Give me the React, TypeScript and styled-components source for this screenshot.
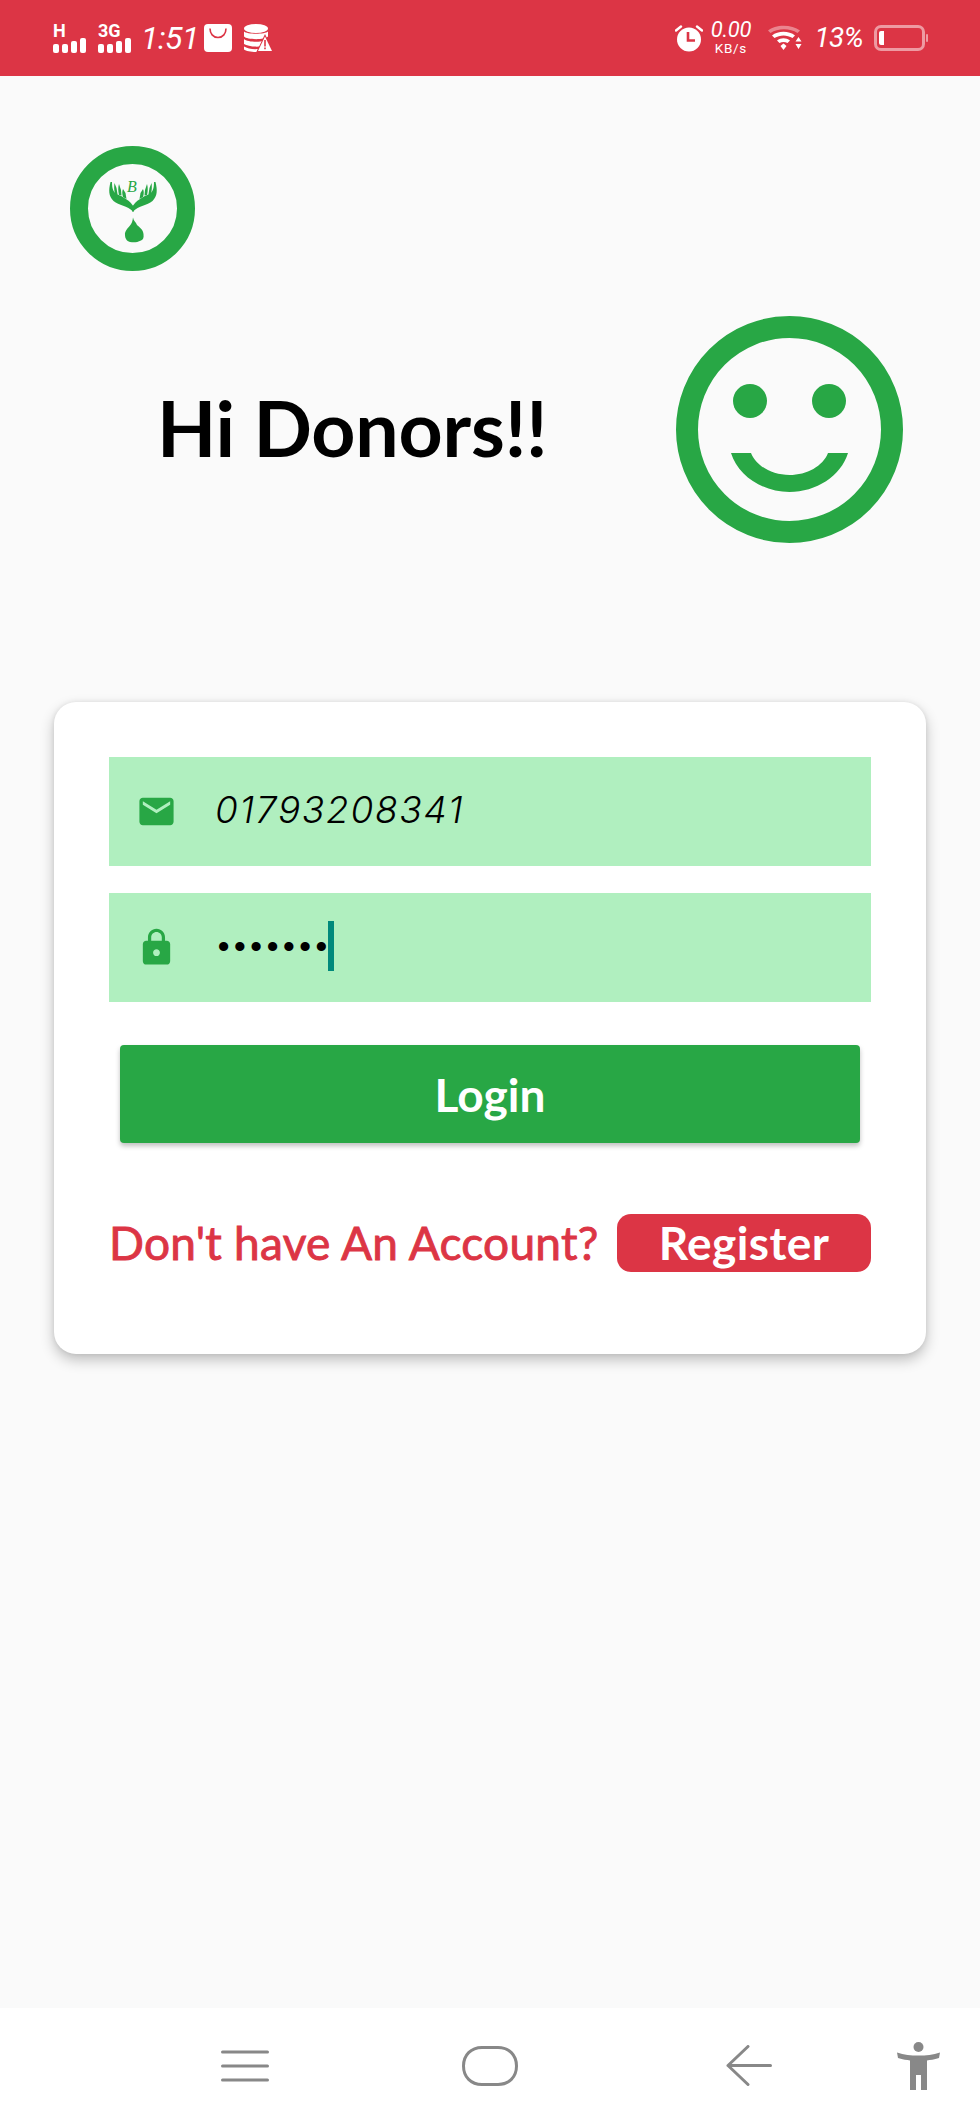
import React from "react";
import styled, { createGlobalStyle } from "styled-components";

const Global = createGlobalStyle`
  html, body { margin: 0; padding: 0; background: #fafafa; }
  * { box-sizing: border-box; }
`;

const Page = styled.div`
  width: 980px; height: 2123px; display: flex; flex-direction: column;
  background: #fafafa; overflow: hidden; font-family: Lato, "Open Sans", sans-serif;
`;

const StatusBar = styled.header`
  height: 76px; flex: none; background: #dc3545; color: #fff;
  display: flex; justify-content: space-between; align-items: center;
  padding: 0 55px 0 53px; font-family: Roboto, sans-serif;
`;
const StatusGroup = styled.div`
  display: flex; align-items: center;
`;
const Network = styled.div`
  display: flex; flex-direction: column; width: 33px; margin-right: 12px; margin-top: -1px;
`;
const NetworkLabel = styled.span`
  font-size: 18px; font-weight: 700; line-height: 15px; height: 15px;
`;
const SignalBars = styled.svg`
  display: block; width: 33px; height: 15px;
`;
const Time = styled.span`
  font-size: 32px; font-style: italic; line-height: 32px; letter-spacing: -0.5px;
  width: 61px; margin-left: -2px;
`;
const StatusIcon = styled.svg<{ $gap?: number }>`
  display: block; flex: none; margin-left: ${p => p.$gap ?? 0}px;
`;
const Speed = styled.div`
  display: flex; flex-direction: column; align-items: center; margin: -2px 16px 0 6px; width: 43px;
`;
const SpeedValue = styled.span`
  font-size: 22px; font-style: italic; line-height: 21px; letter-spacing: -0.3px;
`;
const SpeedUnit = styled.span`
  font-size: 13.5px; line-height: 13px; letter-spacing: 0.7px; margin-top: 2px;
`;
const Percent = styled.span`
  font-size: 28px; font-style: italic; line-height: 30px; margin: 0 11px 0 12px; letter-spacing: -0.6px;
`;
const Battery = styled.div`
  width: 51px; height: 26px; border: 3px solid rgba(255,255,255,.5); border-radius: 7px;
  padding: 3px 2px; position: relative;
  &::after {
    content: ""; position: absolute; right: -6px; top: 6px; width: 2px; height: 8px;
    background: rgba(255,255,255,.5); border-radius: 1px;
  }
`;
const BatteryLevel = styled.div`
  width: 5px; height: 100%; background: #fff; border-radius: 2px 0 0 2px;
`;

const Main = styled.main`
  flex: 1; display: flex; flex-direction: column; padding: 70px 54px 0;
`;
const Logo = styled.svg`
  display: block; width: 125px; height: 125px; margin-left: 16px;
`;
const Hero = styled.section`
  display: flex; justify-content: space-between; align-items: center;
  margin-top: 45px; padding: 0 23px 0 103px;
`;
const Title = styled.h1`
  margin: 0 0 6px; font-size: 77px; line-height: 92px; font-weight: 700; color: #000;
  font-family: Lato, sans-serif; letter-spacing: -0.2px;
`;
const Smiley = styled.svg`
  display: block; width: 227px; height: 227px;
`;

const Card = styled.section`
  margin-top: 159px; height: 652px; background: #fff; border-radius: 22px;
  box-shadow: 0 6px 14px rgba(0,0,0,.24), 0 0 5px rgba(0,0,0,.08);
  padding: 55px 55px 0 55px;
`;
const Field = styled.div`
  height: 109px; background: #b0efbf; display: flex; align-items: center;
  padding-left: 27px; & + & { margin-top: 27px; }
`;
const FieldIcon = styled.svg`
  display: block; width: 41px; height: 41px; fill: #28a745; flex: none;
`;
const FieldText = styled.span`
  margin: 0 0 4px 38px; font-family: Inter, sans-serif; font-size: 37px; font-style: italic;
  font-weight: 300; letter-spacing: 1.7px; color: #000; line-height: 50px;
`;
const Dots = styled.span`
  margin: 0 0 4px 41px; font-family: "Liberation Sans", sans-serif; font-size: 32px; font-weight: 700;
  letter-spacing: 5.1px; color: #000; line-height: 50px;
`;
const Caret = styled.span`
  width: 6px; height: 50px; background: #00897b; margin: 0 0 4px -4px; flex: none;
`;
const LoginButton = styled.button`
  display: block; width: 740px; height: 98px; margin: 43px 0 0 11px; border: 0; border-radius: 4px;
  background: #28a745; color: #fff; font-family: Lato, sans-serif; font-size: 46px; font-weight: 700;
  box-shadow: 0 3px 5px rgba(0,0,0,.25); padding: 0;
`;
const RegisterRow = styled.div`
  display: flex; align-items: center; justify-content: space-between; margin-top: 71px;
`;
const Prompt = styled.span`
  font-family: Lato, sans-serif; font-size: 46px; font-weight: 400; color: #dc3545; line-height: 58px;
  letter-spacing: 0.25px; -webkit-text-stroke: 0.9px #dc3545;
`;
const RegisterButton = styled.button`
  width: 254px; height: 58px; border: 0; border-radius: 14px; background: #dc3545; color: #fff;
  font-family: Lato, sans-serif; font-size: 46px; font-weight: 700; line-height: 58px; padding: 0;
  letter-spacing: 0.4px;
`;

const NavBar = styled.nav`
  height: 115px; flex: none; background: #fff; display: flex; align-items: center; position: relative;
`;
const NavIcon = styled.svg<{ $left: number; $w: number; $h: number }>`
  display: block; flex: none; width: ${p => p.$w}px; height: ${p => p.$h}px; margin-left: ${p => p.$left}px;
  fill: none; stroke: #888;
`;
const AccessIcon = styled(NavIcon)`
  stroke: none; fill: #888;
`;

const Bars = () => (
  <SignalBars viewBox="0 0 33 15" fill="#fff">
    <rect x="0" y="6" width="6" height="9" rx="2" /><rect x="9" y="6" width="6" height="9" rx="2" />
    <rect x="18" y="3" width="6" height="12" rx="2" /><rect x="27" y="0" width="6" height="15" rx="2" />
  </SignalBars>
);

export default function App() {
  return (
    <Page>
      <Global />
      <StatusBar>
        <StatusGroup>
          <Network>
            <NetworkLabel>H</NetworkLabel>
            <Bars />
          </Network>
          <Network>
            <NetworkLabel>3G</NetworkLabel>
            <Bars />
          </Network>
          <Time>1:51</Time>
          <StatusIcon $gap={2} width="28" height="28" viewBox="0 0 28 28">
            <rect width="28" height="28" rx="4" fill="#fff" />
            <path d="M6 4.500c0 5 3 9 8 9s8-4 8-9" fill="none" stroke="#dc3545" strokeWidth="1.600" />
          </StatusIcon>
          <StatusIcon $gap={12} width="29" height="28" viewBox="0 0 29 28">
            <ellipse cx="12" cy="4.500" rx="12" ry="4.500" fill="#fff" />
            <path d="M0 7.500c3 3 21 3 24 0v5c-3 3.500-21 3.500-24 0zM0 15c3 3 15 3.500 19 2l-3 5.500c-6 .5-13-.5-16-2.500zM0 22.500c3 2 9 3 14 2.500l-1.500 3C7 28 2 27 0 25.500z" fill="#fff" />
            <path d="M21 10L29.500 28H12.500z" fill="#dc3545" />
            <path d="M21 12.500L28 27H14z" fill="#fff" />
            <path d="M20.200 16h1.600v6.500h-1.600zM20.200 23.500h1.600v1.800h-1.600z" fill="#dc3545" />
          </StatusIcon>
        </StatusGroup>
        <StatusGroup>
          <StatusIcon width="28" height="28" viewBox="0 0 28 28">
            <circle cx="14" cy="15.500" r="12" fill="#fff" />
            <path d="M13 8v8.500h7" fill="none" stroke="#dc3545" strokeWidth="2.600" />
            <path d="M1 6.500L6 2.500M27 6.500L22 2.500" stroke="#fff" strokeWidth="2.400" strokeLinecap="round" />
          </StatusIcon>
          <Speed>
            <SpeedValue>0.00</SpeedValue>
            <SpeedUnit>KB/s</SpeedUnit>
          </Speed>
          <StatusIcon width="34" height="26" viewBox="0 0 34 26">
            <path d="M0 5.500C7-1 24-1 32 5.500L29.500 8C22 3 10 3 2.500 8z" fill="#fff" opacity=".4" />
            <path d="M4 10.500C10 5.500 21 5.500 27 10.500L24.500 13C19 9.500 12 9.500 6.500 13z" fill="#fff" />
            <path d="M9 15.500C13 12.500 18 12.500 22 15.500L19.500 18C17 16.500 14 16.500 11.500 18z" fill="#fff" />
            <path d="M12.500 21L15.500 18.500L18.500 21L15.500 25z" fill="#fff" />
            <path d="M30.500 12l3 4.500h-6zM30.500 24l3-5h-6z" fill="#fff" />
          </StatusIcon>
          <Percent>13%</Percent>
          <Battery><BatteryLevel /></Battery>
        </StatusGroup>
      </StatusBar>

      <Main>
        <Logo viewBox="0 0 125 125">
          <circle cx="62.500" cy="62.500" r="53.500" fill="none" stroke="#28a745" strokeWidth="18" />
          <text x="62" y="46" textAnchor="middle" fontFamily="'Liberation Serif', serif" fontStyle="italic" fontSize="16" fill="#28a745">B</text>
          <g fill="#28a745">
            <path d="M63.500 66C57 59 49 60 43.500 55C38.500 50 38.500 44 40.500 36L42 36C42 42 43 46 47 48C53 51 60 54 64.500 62z" />
            <path d="M45 48C44 44 44 40 44.500 37L46.500 42L47.500 48zM49 49C48 45 48 41 49 38L51 44L51.500 49.500zM53 51C52 48 52 45 53 43L55.500 47L56.500 53z" />
            <path d="M62.500 66C69 59 77 60 82.500 55C87.500 50 87.500 44 85.500 36L84 36C84 42 83 46 79 48C73 51 66 54 61.500 62z" />
            <path d="M81 48C82 44 82 40 81.500 37L79.500 42L78.500 48zM77 49C78 45 78 41 77 38L75 44L74.500 49.500zM73 51C74 48 74 45 73 43L70.500 47L69.500 53z" />
            <path d="M63 71.500C63.500 75 66 76 67 79C69 81 73 83 73.500 88C74 92 73 94 71 94.500C67 96.500 64 96.500 60 96C56.500 95 55 92 55 89C54.500 85 58 82 60 79.500C62 77 62.500 75 63 71.500z" />
          </g>
        </Logo>
        <Hero>
          <Title>Hi Donors!!</Title>
          <Smiley viewBox="0 0 227 227">
            <circle cx="113.500" cy="113.500" r="102.500" fill="none" stroke="#28a745" strokeWidth="22" />
            <circle cx="74" cy="85" r="17" fill="#28a745" />
            <circle cx="153" cy="85" r="17" fill="#28a745" />
            <path d="M55 137H75C80 150 96 159 113.500 159C131 159 147 150 152 137H172C165 160 140 176 113.500 176C87 176 62 160 55 137z" fill="#28a745" />
          </Smiley>
        </Hero>

        <Card>
          <Field>
            <FieldIcon viewBox="0 0 24 24">
              <path d="M20 4H4c-1.100 0-2 .9-2 2v12c0 1.100.9 2 2 2h16c1.100 0 2-.9 2-2V6c0-1.100-.9-2-2-2zm0 4l-8 5-8-5V6l8 5 8-5v2z" />
            </FieldIcon>
            <FieldText>01793208341</FieldText>
          </Field>
          <Field>
            <FieldIcon viewBox="0 0 24 24">
              <path d="M18 8h-1V6c0-2.760-2.240-5-5-5S7 3.240 7 6v2H6c-1.100 0-2 .9-2 2v10c0 1.100.9 2 2 2h12c1.100 0 2-.9 2-2V10c0-1.100-.9-2-2-2zm-6 9c-1.100 0-2-.9-2-2s.9-2 2-2 2 .9 2 2-.9 2-2 2zm3.100-9H8.900V6c0-1.710 1.390-3.100 3.100-3.100 1.710 0 3.100 1.390 3.100 3.100v2z" />
            </FieldIcon>
            <Dots>•••••••</Dots>
            <Caret />
          </Field>
          <LoginButton>Login</LoginButton>
          <RegisterRow>
            <Prompt>Don't have An Account?</Prompt>
            <RegisterButton>Register</RegisterButton>
          </RegisterRow>
        </Card>
      </Main>

      <NavBar>
        <NavIcon $left={221} $w={48} $h={34} viewBox="0 0 48 34" strokeWidth="3" strokeLinecap="round">
          <path d="M1.500 3h45M1.500 17h45M1.500 31h45" />
        </NavIcon>
        <NavIcon $left={193} $w={56} $h={40} viewBox="0 0 56 40" strokeWidth="3">
          <path d="M20 1.500H36C47 1.500 54.500 9 54.500 20S47 38.500 36 38.500H20C9 38.500 1.500 31 1.500 20S9 1.500 20 1.500z" />
        </NavIcon>
        <NavIcon $left={208} $w={46} $h={41} viewBox="0 0 46 41" strokeWidth="3" strokeLinecap="round" strokeLinejoin="round">
          <path d="M22 1.500L2 20.500L22 39.500M2 20.500H44.500" />
        </NavIcon>
        <AccessIcon $left={125} $w={43} $h={48} viewBox="0 0 43 48">
          <ellipse cx="21.500" cy="5" rx="5" ry="5" />
          <path d="M0 10.500C7 13 14 13.500 21.500 13.500S36 13 43 10.500L42 16C37 17.500 33 18 30 18.500V48H24V33H19V48H13V18.500C10 18 6 17.500 1 16z" />
        </AccessIcon>
      </NavBar>
    </Page>
  );
}
